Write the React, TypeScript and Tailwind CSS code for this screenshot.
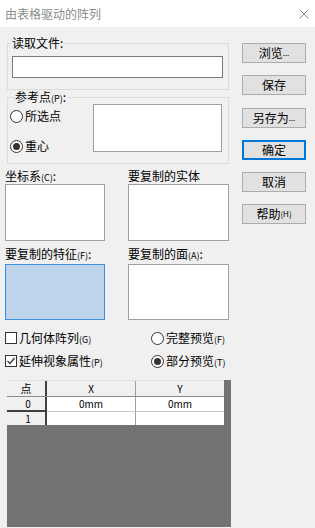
const Radio = ({ checked }: { checked?: boolean }) => (
  <span className="w-[13px] h-[13px] rounded-full border border-[#333] bg-white flex items-center justify-center shrink-0">
    {checked && <span className="w-[7px] h-[7px] rounded-full bg-[#333]" />}
  </span>
);

const Check = ({ checked }: { checked?: boolean }) => (
  <span className="w-[12px] h-[12px] border border-[#333] bg-white flex items-center justify-center shrink-0">
    {checked && (
      <svg width="10" height="10" viewBox="0 0 10 10">
        <path d="M1.5 5 L4 7.5 L8.5 2" fill="none" stroke="#333" strokeWidth="1.2" />
      </svg>
    )}
  </span>
);

const Sm = ({ children }: { children: React.ReactNode }) => (
  <span className="text-[9px] leading-none">{children}</span>
);

const Btn = ({ children, primary }: { children: React.ReactNode; primary?: boolean }) => (
  <button
    className={
      'w-[64px] h-[20px] bg-[#e1e1e1] border flex items-center justify-center text-[12px] leading-none text-black ' +
      (primary ? 'border-[#0078d7] shadow-[inset_0_0_0_1px_#0078d7]' : 'border-[#adadad]')
    }
  >
    {children}
  </button>
);

const App = () => {
  return (
    <div
      className="w-[315px] h-[528px] bg-[#f0f0f0] overflow-hidden text-black text-[12px] leading-[14px]"
      style={{ fontFamily: '"Noto Sans CJK SC", "Noto Sans", sans-serif' }}
    >
      {/* title bar */}
      <div className="h-[27px] bg-white flex items-center justify-between pl-[5px] pr-[6px]">
        <span className="text-[12px] text-[#8a8a8a]">由表格驱动的阵列</span>
        <svg width="10" height="10" viewBox="0 0 10 10">
          <path d="M0.5 0.5 L9.5 9.5 M9.5 0.5 L0.5 9.5" stroke="#8a8a8a" strokeWidth="1" />
        </svg>
      </div>

      <div className="flex">
        {/* left column */}
        <div className="w-[232px] pl-[5px] flex flex-col">
          <fieldset className="mt-[9px] ml-[2px] w-[222px] border border-[#dcdcdc] pl-[4px] pr-[5px] pb-[11px]">
            <legend className="px-[1px] -ml-[1px] h-[14px] leading-[14px]">读取文件:</legend>
            <div className="mt-[6px] h-[22px] bg-white border border-[#7a7a7a]" />
          </fieldset>

          <fieldset className="ml-[2px] w-[222px] border border-[#dcdcdc] pl-[2px] pr-[6px] pb-[10px]">
            <legend className="ml-[4px] px-[1px] h-[14px] leading-[14px]">
              参考点<Sm>(P)</Sm>:
            </legend>
            <div className="flex justify-between">
              <div className="flex flex-col">
                <div className="mt-[5px] h-[14px] flex items-center gap-[2px]">
                  <Radio />
                  <span>所选点</span>
                </div>
                <div className="mt-[16px] h-[14px] flex items-center gap-[2px]">
                  <Radio checked />
                  <span>重心</span>
                </div>
              </div>
              <div className="w-[129px] h-[48px] bg-white border border-[#a0a0a0]" />
            </div>
          </fieldset>

          <div className="grid grid-cols-[100px_101px] gap-x-[23px]">
            <div className="mt-[5px] h-[14px]">
              坐标系<Sm>(C)</Sm>:
            </div>
            <div className="mt-[5px] h-[14px]">要复制的实体</div>
            <div className="mt-[1px] h-[57px] bg-white border border-[#a0a0a0]" />
            <div className="mt-[1px] h-[57px] bg-white border border-[#a0a0a0]" />
            <div className="mt-[6px] h-[14px]">
              要复制的特征<Sm>(F)</Sm>:
            </div>
            <div className="mt-[6px] h-[14px]">
              要复制的面<Sm>(A)</Sm>:
            </div>
            <div className="mt-[3px] h-[56px] bg-[#bed4ea] border border-[#3d8ee0]" />
            <div className="mt-[3px] h-[56px] bg-white border border-[#a0a0a0]" />
          </div>

          <div className="grid grid-cols-[146px_80px]">
            <div className="mt-[11px] h-[14px] flex items-center gap-[2px]">
              <Check />
              <span>
                几何体阵列<Sm>(G)</Sm>
              </span>
            </div>
            <div className="mt-[11px] h-[14px] flex items-center gap-[2px]">
              <Radio />
              <span>
                完整预览<Sm>(F)</Sm>
              </span>
            </div>
            <div className="mt-[9px] h-[14px] flex items-center gap-[2px]">
              <Check checked />
              <span>
                延伸视象属性<Sm>(P)</Sm>
              </span>
            </div>
            <div className="mt-[9px] h-[14px] flex items-center gap-[2px]">
              <Radio checked />
              <span>
                部分预览<Sm>(T)</Sm>
              </span>
            </div>
          </div>

          {/* table */}
          <div className="mt-[12px] ml-[2px] w-[224px] h-[147px] bg-[#737373] text-[10px] leading-none">
            <div className="w-[217px] flex flex-col">
              <div className="flex h-[17px] bg-[#f0f0f0] border-t border-[#e0e0e0] border-b border-b-[#8a8a8a]">
                <div className="w-[40px] border-r-2 border-[#404040] flex items-center justify-center text-[11px]">点</div>
                <div className="w-[89px] border-r border-[#a0a0a0] flex items-center justify-center">X</div>
                <div className="w-[88px] flex items-center justify-center">Y</div>
              </div>
              <div className="flex h-[15px]">
                <div className="w-[40px] bg-[#f0f0f0] border-r-2 border-[#404040] border-b-2 border-b-[#404040] flex items-center justify-center pl-[4px]">0</div>
                <div className="w-[89px] bg-white border-r border-[#a0a0a0] border-b border-b-[#c8c8c8] flex items-center justify-center">0mm</div>
                <div className="w-[88px] bg-white border-b border-[#c8c8c8] flex items-center justify-center">0mm</div>
              </div>
              <div className="flex h-[13px]">
                <div className="w-[40px] bg-[#f0f0f0] border-r-2 border-[#404040] flex items-center justify-center pl-[4px]">1</div>
                <div className="w-[89px] bg-white border-r border-[#a0a0a0]" />
                <div className="w-[88px] bg-white" />
              </div>
            </div>
          </div>
        </div>

        {/* right buttons */}
        <div className="ml-[10px] mt-[16px] flex flex-col gap-[12.3px]">
          <Btn>
            浏览<span className="text-[8px]">...</span>
          </Btn>
          <Btn>保存</Btn>
          <Btn>
            另存为<span className="text-[8px]">...</span>
          </Btn>
          <Btn primary>确定</Btn>
          <Btn>取消</Btn>
          <Btn>
            帮助<span className="text-[8px]">(H)</span>
          </Btn>
        </div>
      </div>
    </div>
  );
};

export default App;
